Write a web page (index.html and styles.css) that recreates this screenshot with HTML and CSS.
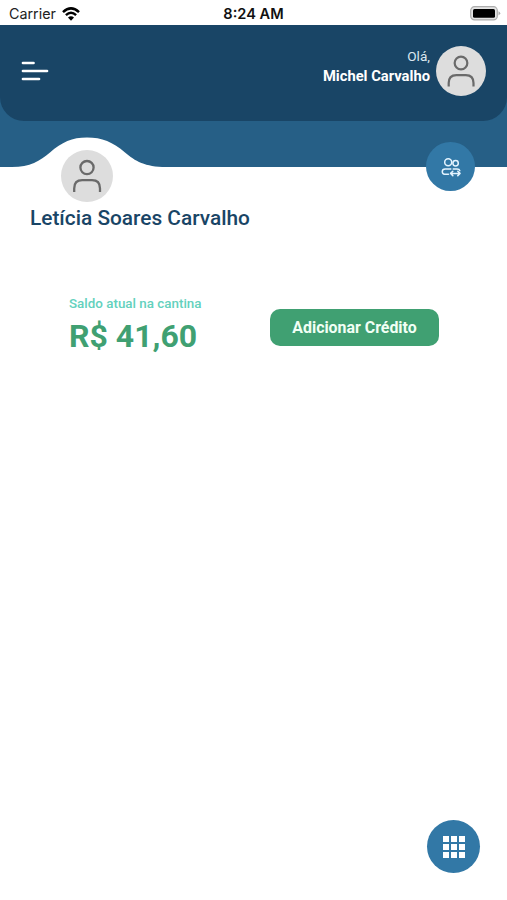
FILE: index.html
```html
<!DOCTYPE html>
<html lang="pt-BR">
<head>
<meta charset="utf-8">
<title>Cantina</title>
<link rel="stylesheet" href="styles.css">
</head>
<body>
<div class="status">
  <div class="status-left">
    <span class="carrier">Carrier</span>
    <svg class="wifi" width="18" height="14" viewBox="0 0 18 14" fill="none" stroke="#000" stroke-width="2.5">
      <path d="M1 5.1Q9-2.3 17 5.1M3.9 8.1Q9 3.5 14.1 8.1"/>
      <path d="M9 13.7L6 10.6Q9 8 12 10.6Z" fill="#000" stroke="none"/>
    </svg>
  </div>
  <span class="clock">8:24 AM</span>
  <svg class="battery" width="31" height="15" viewBox="0 0 31 15">
    <rect x=".7" y=".7" width="26.6" height="13.2" rx="3.8" fill="#e4e4e4" stroke="#adadad" stroke-width="1.2"/>
    <rect x="3" y="2.9" width="22" height="8.9" rx="1.5" fill="#000"/>
    <path d="M28.5 5.2Q32 7.3 28.5 9.4Z" fill="#adadad"/>
  </svg>
</div>
<header class="band">
  <div class="topbar">
    <svg class="menu" width="28" height="20" viewBox="0 0 28 20" stroke="#fff" stroke-width="2.7" stroke-linecap="round">
      <path d="M2 2H12.5M2 10H26M2 18H18"/>
    </svg>
    <div class="user">
      <div class="greeting"><span class="hello">Olá,</span><strong class="username">Michel Carvalho</strong></div>
      <svg class="avatar" width="50" height="50" viewBox="0 0 52 52">
        <circle cx="26" cy="26" r="26" fill="#ddd"/>
        <g fill="none" stroke="#6a6a6a" stroke-width="2.3"><circle cx="26" cy="17.6" r="6.6"/><path d="M13.2 42V38.5Q13.2 30.2 21.2 30.2H31Q39 30.2 39 38.5V42"/></g>
      </svg>
    </div>
  </div>
  <svg class="wave" width="174" height="31" viewBox="0 0 174 31"><path d="M0 30H12C30 30 40 24 50 15.5C62 5 72 .5 87 .5S113 5 125 15.5C135 24 145 30 166 30H174V31H0Z" fill="#fff"/></svg>
  <button class="switch" aria-label="Trocar aluno">
    <svg width="20" height="20" viewBox="0 0 20 20" fill="none" stroke="#e4f4ff" stroke-width="1.5" stroke-linecap="round" stroke-linejoin="round">
      <circle cx="7.2" cy="5.3" r="3.5"/><circle cx="14.6" cy="6.3" r="2.7"/>
      <path d="M7.5 17.2H3.6Q1.3 17.2 1.3 14.6Q1.3 12 4.2 12H9.8M12.2 12H16Q18.4 12 18.8 13.6M9.8 16.4H18.8M11.8 14.2L9.6 16.4L11.8 18.6M16.8 14.2L19 16.4L16.8 18.6"/>
    </svg>
  </button>
</header>
<main>
  <section class="student">
    <svg class="avatar student-avatar" width="52" height="52" viewBox="0 0 52 52">
      <circle cx="26" cy="26" r="26" fill="#ddd"/>
      <g fill="none" stroke="#6a6a6a" stroke-width="2.3"><circle cx="26" cy="17.6" r="6.6"/><path d="M13.2 42V38.5Q13.2 30.2 21.2 30.2H31Q39 30.2 39 38.5V42"/></g>
    </svg>
    <h1>Letícia Soares Carvalho</h1>
  </section>
  <section class="balance">
    <div class="balance-info"><span class="label">Saldo atual na cantina</span><strong class="amount">R$ 41,60</strong></div>
    <button class="add">Adicionar Crédito</button>
  </section>
</main>
<button class="fab" aria-label="Menu"><svg width="22" height="22" viewBox="0 0 22 22" fill="#fff"><path d="M0 0h6v6H0zM8 0h6v6H8zM16 0h6v6h-6zM0 8h6v6H0zM8 8h6v6H8zM16 8h6v6h-6zM0 16h6v6H0zM8 16h6v6H8zM16 16h6v6h-6z"/></svg></button>
</body>
</html>
```
FILE: styles.css
```css
* { box-sizing: border-box; }
body { margin: 0; height: 900px; background: #fff; font-family: Roboto, sans-serif; position: relative; overflow: hidden; }
button { border: 0; padding: 0; font-family: inherit; display: flex; align-items: center; justify-content: center; }
svg { display: block; flex: none; }
.status { height: 25px; display: grid; grid-template-columns: 1fr auto 1fr; align-items: center; padding: 2px 6px 0 6px; font-family: Inter, sans-serif; color: #222; }
.status-left { display: flex; align-items: center; gap: 6px; padding-left: 3px; }
.carrier { font-size: 14.3px; }
.clock { font-size: 14.6px; font-weight: 600; color: #111; }
.battery { justify-self: end; }
.band { height: 142px; background: #265f86; position: relative; }
.topbar { height: 96px; background: #194566; border-radius: 0 0 24px 24px; display: flex; justify-content: space-between; align-items: center; padding: 0 21px 4px; }
.user { display: flex; align-items: center; gap: 6px; }
.greeting { display: flex; flex-direction: column; align-items: flex-end; color: #fff; padding-bottom: 10px; line-height: 20px; }
.hello { font-size: 13.6px; color: #dce8f0; }
.username { font-size: 14.75px; font-weight: 700; }
.wave { position: absolute; left: 0; bottom: -1px; }
.switch { position: absolute; right: 32px; top: 117px; width: 49px; height: 49px; border-radius: 50%; background: #3278a6; }
.student { padding: 0 30px; position: relative; margin-top: -17px; }
.student-avatar { margin-left: 31px; }
h1 { margin: 4px 0 0; font-size: 20.85px; line-height: 24px; font-weight: 500; color: #194566; }
.balance { display: flex; justify-content: space-between; padding: 0 68px 0 69px; margin-top: 66px; }
.balance-info { display: flex; flex-direction: column; }
.label { font-size: 13.4px; line-height: 16px; font-weight: 500; color: #63d1bd; }
.amount { font-size: 32px; line-height: 38px; margin-top: 5px; color: #40a072; }
.add { width: 169px; height: 37px; margin-top: 13px; padding-bottom: 1px; border-radius: 10px; background: #40a072; color: #f1fff5; font-size: 15.9px; font-weight: 700; }
.fab { position: absolute; right: 27px; bottom: 27px; width: 53px; height: 53px; border-radius: 50%; background: #3278a6; }
```
